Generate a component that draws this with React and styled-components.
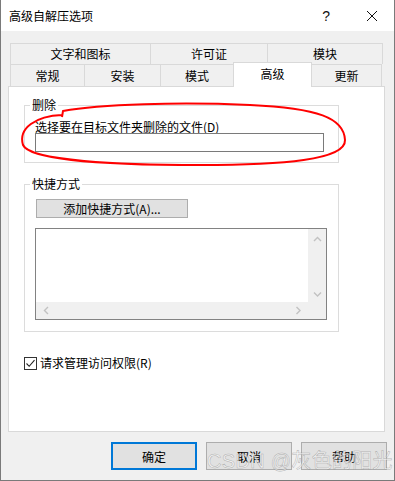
import React from 'react';
import styled, { createGlobalStyle } from 'styled-components';

const GlobalStyle = createGlobalStyle`
  html, body {
    margin: 0;
    padding: 0;
    background: #ffffff;
  }
  body {
    font-family: 'Noto Sans CJK SC', 'Noto Sans', sans-serif;
    font-size: 12px;
    color: #000;
  }
`;

const topTabs = [
  { label: '文字和图标', w: 141 },
  { label: '许可证', w: 118 },
  { label: '模块', w: 116 },
];

const bottomTabs = [
  { label: '常规', w: 75 },
  { label: '安装', w: 77 },
  { label: '模式', w: 74 },
  { label: '高级', w: 79, active: true },
  { label: '更新', w: 71 },
];

const Chevron = ({ dir }) => {
  const paths = {
    up: 'M1 5 L4.5 1.5 L8 5',
    down: 'M1 1.5 L4.5 5 L8 1.5',
    left: 'M5 1 L1.5 4.5 L5 8',
    right: 'M1.5 1 L5 4.5 L1.5 8',
  };
  const vertical = dir === 'up' || dir === 'down';
  return (
    <svg width={vertical ? 9 : 7} height={vertical ? 7 : 9} viewBox={vertical ? '0 0 9 7' : '0 0 7 9'}>
      <path d={paths[dir]} fill='none' stroke='#c2c2c2' strokeWidth='1.4' />
    </svg>
  );
};

const App = () => {
  return (
    <>
      <GlobalStyle />
      <Window>
        <TitleBar>
          <Title>高级自解压选项</Title>
          <TitleButtons>
            <HelpGlyph>?</HelpGlyph>
            <svg width='12' height='12' viewBox='0 0 12 12'>
              <path d='M1 1 L11 11 M11 1 L1 11' stroke='#111' strokeWidth='1' />
            </svg>
          </TitleButtons>
        </TitleBar>

        <Body>
          <TabRow>
            {topTabs.map((t, i) => (
              <Tab key={t.label} $w={t.w} $first={i === 0} $h={21}>
                {t.label}
              </Tab>
            ))}
          </TabRow>
          <TabRow>
            {bottomTabs.map((t, i) => (
              <Tab key={t.label} $w={t.w} $first={i === 0} $h={22} $active={t.active}>
                {t.label}
              </Tab>
            ))}
          </TabRow>

          <Panel>
            <GroupBox $top={18}>
              <Legend>删除</Legend>
              <GroupInner $pt={14} $pb={10}>
                <FieldLabel>选择要在目标文件夹删除的文件(D)</FieldLabel>
                <TextInput />
              </GroupInner>
            </GroupBox>

            <GroupBox $top={21}>
              <Legend>快捷方式</Legend>
              <GroupInner $pt={14} $pb={11}>
                <AddButton>添加快捷方式(A)...</AddButton>
                <ListBox>
                  <ListArea />
                  <VScroll>
                    <Chevron dir='up' />
                    <Chevron dir='down' />
                  </VScroll>
                  <HScroll>
                    <Chevron dir='left' />
                    <Chevron dir='right' />
                  </HScroll>
                  <ScrollCorner />
                </ListBox>
              </GroupInner>
            </GroupBox>

            <CheckRow>
              <CheckBox>
                <svg width='11' height='11' viewBox='0 0 11 11'>
                  <path d='M1.5 5.5 L4.2 8.3 L9.5 2.2' fill='none' stroke='#222' strokeWidth='1.1' />
                </svg>
              </CheckBox>
              <span>请求管理访问权限(R)</span>
            </CheckRow>
          </Panel>

          <ButtonRow>
            <DialogButton $default>确定</DialogButton>
            <DialogButton>取消</DialogButton>
            <DialogButton>帮助</DialogButton>
          </ButtonRow>
        </Body>

        <Annotation width='395' height='481' viewBox='0 0 395 481'>
          <path
            d='M62 117 L63 111 C 100 104, 180 102, 250 105 C 318 108, 344 118, 345 140 C 346 160, 282 165, 200 165 C 120 165, 30 161, 23 145 C 18 128, 36 116, 62 115'
            fill='none'
            stroke='#ff0000'
            strokeWidth='2'
          />
        </Annotation>
        <Watermark>CSDN @灰色的阳光</Watermark>
      </Window>
    </>
  );
};

const Window = styled.div`
  position: relative;
  width: 395px;
  height: 481px;
  box-sizing: border-box;
  border-left: 1px solid #7a7a7a;
  border-right: 1px solid #7a7a7a;
  border-bottom: 1px solid #7a7a7a;
  background: #f0f0f0;
  display: flex;
  flex-direction: column;
  overflow: hidden;
`;

const TitleBar = styled.div`
  height: 31px;
  background: #ffffff;
  display: flex;
  align-items: center;
  justify-content: space-between;
  padding: 0 16px 0 8px;
  flex-shrink: 0;
`;

const Title = styled.div`
  font-size: 12px;
  line-height: 16px;
`;

const TitleButtons = styled.div`
  display: flex;
  align-items: center;
  gap: 36px;
`;

const HelpGlyph = styled.span`
  font-family: 'Liberation Sans', sans-serif;
  font-size: 14px;
  color: #111;
`;

const Body = styled.div`
  flex: 1;
  display: flex;
  flex-direction: column;
  padding: 12px 0 0 7px;
`;

const TabRow = styled.div`
  display: flex;
  margin-left: 2px;
  align-items: flex-end;
`;

const Tab = styled.div`
  position: relative;
  box-sizing: border-box;
  width: ${({ $w }) => $w}px;
  height: ${({ $h, $active }) => ($active ? $h + 3 : $h)}px;
  margin-left: ${({ $first }) => ($first ? 0 : -1)}px;
  margin-top: ${({ $active }) => ($active ? -2 : 0)}px;
  margin-bottom: ${({ $active }) => ($active ? -1 : 0)}px;
  border: 1px solid #d9d9d9;
  border-bottom: none;
  background: ${({ $active }) => ($active ? '#ffffff' : '#f0f0f0')};
  z-index: ${({ $active }) => ($active ? 2 : 1)};
  display: flex;
  justify-content: center;
  align-items: ${({ $active }) => ($active ? 'flex-start' : 'center')};
  padding-top: ${({ $active }) => ($active ? 3 : 0)}px;
  font-size: 12px;
  line-height: 16px;
`;

const Panel = styled.div`
  position: relative;
  box-sizing: border-box;
  width: 377px;
  height: 346px;
  background: #ffffff;
  border: 1px solid #d9d9d9;
  padding-left: 15px;
  display: flex;
  flex-direction: column;
  align-items: flex-start;
`;

const GroupBox = styled.div`
  position: relative;
  box-sizing: border-box;
  width: 315px;
  margin-top: ${({ $top }) => $top}px;
  border: 1px solid #dcdcdc;
`;

const Legend = styled.div`
  position: absolute;
  top: -9px;
  left: 5px;
  padding: 0 2px;
  background: #ffffff;
  font-size: 12px;
  line-height: 16px;
`;

const GroupInner = styled.div`
  display: flex;
  flex-direction: column;
  align-items: flex-start;
  padding: ${({ $pt }) => $pt}px 0 ${({ $pb }) => $pb}px 10px;
`;

const FieldLabel = styled.div`
  font-size: 12px;
  line-height: 13px;
  white-space: nowrap;
`;

const TextInput = styled.div`
  box-sizing: border-box;
  width: 289px;
  height: 19px;
  border: 1px solid #7a7a7a;
  background: #ffffff;
`;

const AddButton = styled.div`
  box-sizing: border-box;
  width: 152px;
  height: 19px;
  margin-left: 1px;
  border: 1px solid #adadad;
  background: #e1e1e1;
  display: flex;
  align-items: center;
  justify-content: center;
  font-size: 12px;
`;

const ListBox = styled.div`
  box-sizing: border-box;
  width: 292px;
  height: 92px;
  margin-top: 10px;
  border: 1px solid #828282;
  display: grid;
  grid-template-columns: 1fr 18px;
  grid-template-rows: 1fr 17px;
`;

const ListArea = styled.div`
  background: #ffffff;
`;

const VScroll = styled.div`
  background: #f0f0f0;
  display: flex;
  flex-direction: column;
  align-items: center;
  justify-content: space-between;
  padding: 7px 0 4px;
`;

const HScroll = styled.div`
  background: #f0f0f0;
  display: flex;
  align-items: center;
  justify-content: space-between;
  padding: 0 6px 0 7px;
`;

const ScrollCorner = styled.div`
  background: #f0f0f0;
`;

const CheckRow = styled.div`
  display: flex;
  align-items: center;
  gap: 3px;
  margin-top: 24px;
  font-size: 12px;
  line-height: 14px;
`;

const CheckBox = styled.div`
  box-sizing: border-box;
  width: 13px;
  height: 13px;
  border: 1px solid #333333;
  background: #ffffff;
  display: flex;
  align-items: center;
  justify-content: center;
`;

const ButtonRow = styled.div`
  display: flex;
  gap: 9px;
  margin-top: 10px;
  padding-left: 103px;
`;

const DialogButton = styled.div`
  box-sizing: border-box;
  width: 86px;
  height: 28px;
  background: #e1e1e1;
  border: ${({ $default }) => ($default ? '2px solid #0078d7' : '1px solid #adadad')};
  display: flex;
  align-items: center;
  justify-content: center;
  font-size: 12px;
`;

const Annotation = styled.svg`
  position: absolute;
  left: -1px;
  top: 0;
  pointer-events: none;
`;

const Watermark = styled.div`
  position: absolute;
  left: 206px;
  top: 448px;
  font-family: 'Liberation Sans', 'Noto Sans CJK SC', sans-serif;
  font-size: 20px;
  line-height: 26px;
  color: rgba(255, 255, 255, 0.6);
  -webkit-text-stroke: 0.5px rgba(110, 110, 110, 0.5);
  letter-spacing: 0.3px;
  white-space: nowrap;
  pointer-events: none;
`;

export default App;
